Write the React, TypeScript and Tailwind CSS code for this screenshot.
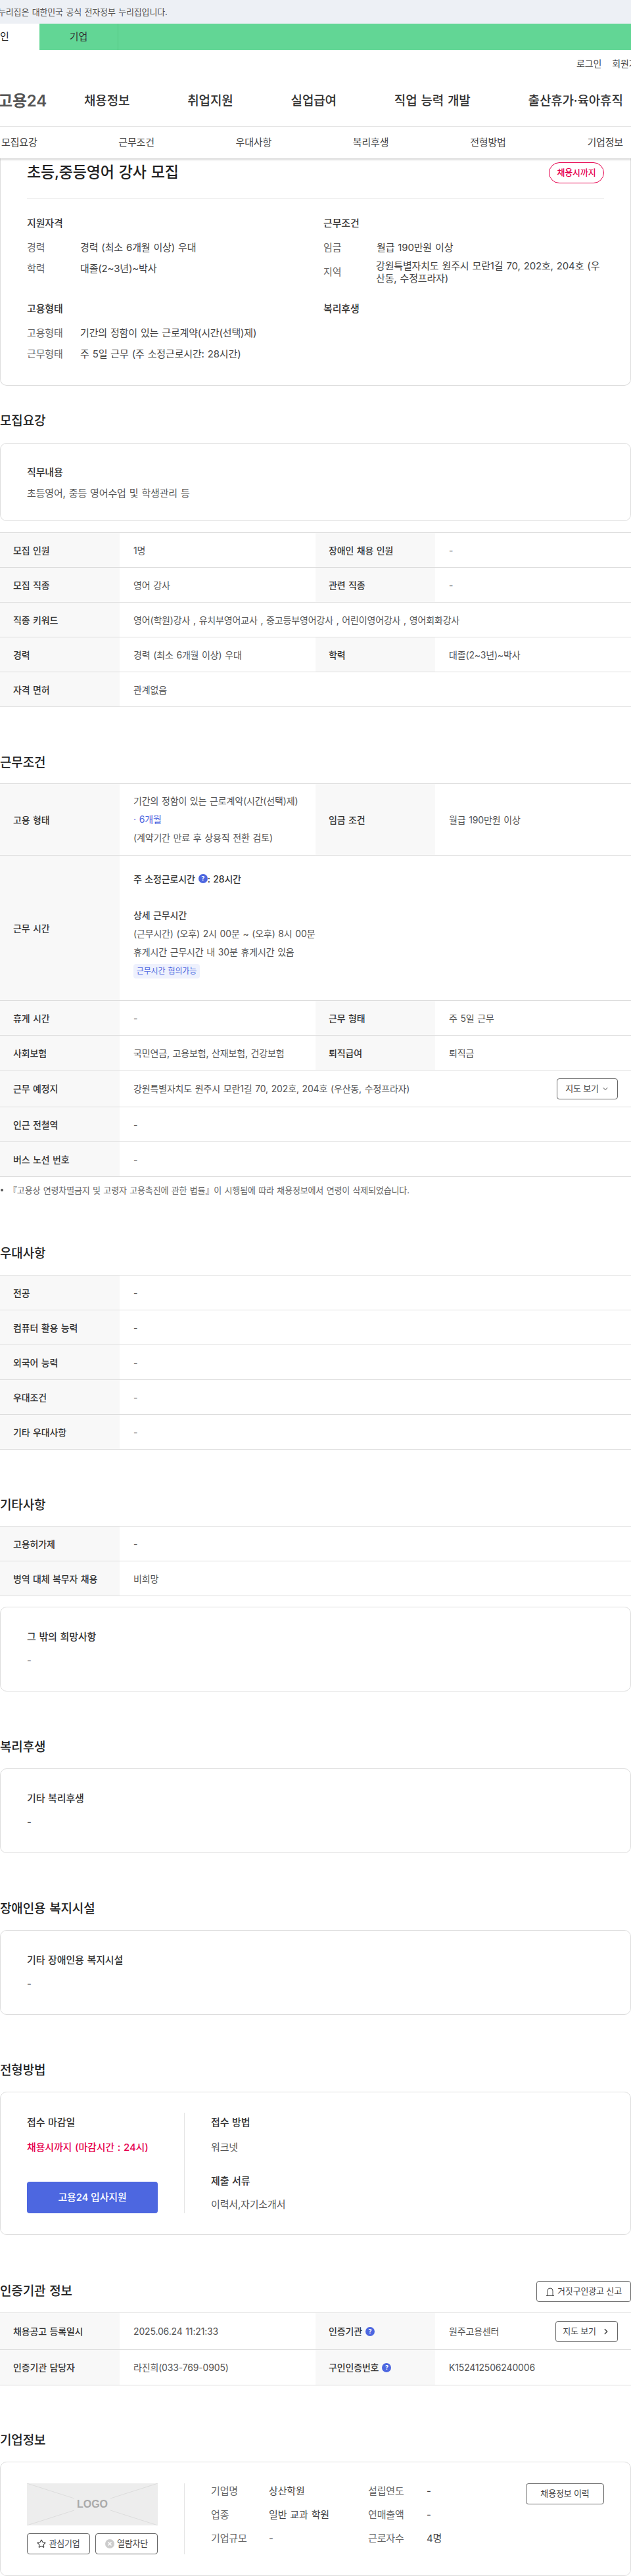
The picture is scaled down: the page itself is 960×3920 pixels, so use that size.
import type { ReactNode } from 'react'
import { ChevronDown, ChevronRight, Star } from 'lucide-react'

const NAV = ['채용정보', '취업지원', '실업급여', '직업 능력 개발', '출산휴가·육아휴직']
const TABS = ['모집요강', '근무조건', '우대사항', '복리후생', '전형방법', '기업정보']

function Heading({ children, className }: { children: ReactNode; className: string }) {
  return <h2 className={`h-[30px] text-[19px] leading-[30px] font-medium text-[#222] ${className}`}>{children}</h2>
}

function Th({ children }: { children: ReactNode }) {
  return <div className="flex items-center bg-[#f8f8f8] pl-5 text-[#333] font-medium">{children}</div>
}

function Td({ children, span }: { children: ReactNode; span?: boolean }) {
  return <div className={`flex items-center pl-[21px] text-[#555] ${span ? 'col-span-3' : ''}`}>{children}</div>
}

// h is the full row height, bottom border included
function Row({ h = 'h-[53px]', children }: { h?: string; children: ReactNode }) {
  return <div className={`grid grid-cols-[182px_298px_182px_1fr] border-b border-[#ddd] ${h}`}>{children}</div>
}

function Row1({ label, value }: { label: string; value: string }) {
  return (
    <Row>
      <Th>{label}</Th>
      <Td span>{value}</Td>
    </Row>
  )
}

function Row2({ a, b, c, d }: { a: string; b: string; c: string; d: string }) {
  return (
    <Row>
      <Th>{a}</Th>
      <Td>{b}</Td>
      <Th>{c}</Th>
      <Td>{d}</Td>
    </Row>
  )
}

function Table({ className, children }: { className: string; children: ReactNode }) {
  return <div className={`border-t border-[#ddd] text-[14px] ${className}`}>{children}</div>
}

function TextCard({ title, value, className }: { title: string; value: string; className: string }) {
  return (
    <div className={`h-[129px] rounded-[10px] border border-[#ddd] px-10 pt-[33px] text-[15px] ${className}`}>
      <div className="leading-6 text-[#333] font-medium">{title}</div>
      <div className="mt-3 leading-6 text-[#555]">{value}</div>
    </div>
  )
}

function Help() {
  return (
    <span className="mx-[5px] inline-flex h-[14px] w-[14px] items-center justify-center rounded-full bg-[#4d67e0] text-[9px] font-bold text-white">?</span>
  )
}

function OutlineBtn({ className, children }: { className: string; children: ReactNode }) {
  return (
    <button className={`flex h-8 items-center justify-center rounded-[4px] border border-[#666] text-[13px] text-[#444] ${className}`}>{children}</button>
  )
}

function Info({ label, value, w }: { label: string; value: string; w: string }) {
  return (
    <div className="flex h-[24px] items-center">
      <span className={`text-[#666] ${w}`}>{label}</span>
      <span className="text-[#444]">{value}</span>
    </div>
  )
}

function SummaryRow({ label, children }: { label: string; children: ReactNode }) {
  return (
    <div className="flex text-[15px] leading-6">
      <span className="w-[81px] shrink-0 text-[#666]">{label}</span>
      <span className="text-[#444]">{children}</span>
    </div>
  )
}

export default function App() {
  return (
    <div className="h-[3920px] w-[960px] overflow-hidden bg-white font-['Inter','Noto_Sans_CJK_KR',sans-serif] tracking-[-0.01em] whitespace-nowrap text-[#333] [word-spacing:1px]">
      {/* gov banner */}
      <div className="h-9 bg-[#edf0f5] text-[13px] leading-9 text-[#555]">
        <span className="-ml-[3px]">누리집은 대한민국 공식 전자정부 누리집입니다.</span>
      </div>
      <div className="flex h-10 bg-[#62d695] text-[15px] leading-10">
        <div className="-ml-[60px] w-[120px] bg-white text-center text-[#222]">개인</div>
        <div className="w-[120px] border-r border-[#56c886] text-center text-[#333]">기업</div>
      </div>

      {/* header */}
      <div className="flex h-10 items-center gap-4 pl-[877px] text-[14px] text-[#444]">
        <span>로그인</span>
        <span>회원가입</span>
      </div>
      <div className="flex h-[76px] items-center text-[19px] font-medium text-[#333]">
        <span className="-ml-[3px] w-[131px] text-[24px] font-semibold text-[#555]">고용24</span>
        <div className="flex gap-[88px]">
          {NAV.map(n => <span key={n}>{n}</span>)}
        </div>
      </div>
      <div className="relative z-10 flex h-[49px] items-center justify-between border-t border-[#e5e5e5] bg-white pr-3 pl-[2px] text-[15px] text-[#444] shadow-[0_2px_3px_rgba(0,0,0,0.18)]">
        {TABS.map(t => <span key={t}>{t}</span>)}
      </div>

      {/* summary card */}
      <div className="h-[346px] rounded-b-[10px] border border-t-0 border-[#ddd] px-10 pt-[6px]">
        <div className="flex h-[56px] items-start justify-between border-b border-[#e8e8e8]">
          <h1 className="text-[23px] leading-[30px] font-medium text-[#222]">초등,중등영어 강사 모집</h1>
          <span className="flex h-8 w-[84px] items-center justify-center rounded-full border border-[#e6004d] text-[13px] font-medium text-[#e6004d]">채용시까지</span>
        </div>
        <div className="mt-[25px] grid grid-cols-[451px_1fr]">
          <div className="h-[105px]">
            <div className="text-[15px] leading-6 font-medium text-[#333]">지원자격</div>
            <div className="mt-[13px] flex flex-col gap-2">
              <SummaryRow label="경력">경력 (최소 6개월 이상) 우대</SummaryRow>
              <SummaryRow label="학력">대졸(2~3년)~박사</SummaryRow>
            </div>
          </div>
          <div>
            <div className="text-[15px] leading-6 font-medium text-[#333]">근무조건</div>
            <div className="mt-[13px]">
              <SummaryRow label="임금">월급 190만원 이상</SummaryRow>
              <div className="mt-[7px] flex items-center text-[15px] leading-[18.5px]">
                <span className="w-[80px] shrink-0 text-[#666]">지역</span>
                <span className="text-[#444]">강원특별자치도 원주시 모란1길 70, 202호, 204호 (우<br />산동, 수정프라자)</span>
              </div>
            </div>
          </div>
          <div className="mt-[25px]">
            <div className="text-[15px] leading-6 font-medium text-[#333]">고용형태</div>
            <div className="mt-[13px] flex flex-col gap-2">
              <SummaryRow label="고용형태">기간의 정함이 있는 근로계약(시간(선택)제)</SummaryRow>
              <SummaryRow label="근무형태">주 5일 근무 (주 소정근로시간: 28시간)</SummaryRow>
            </div>
          </div>
          <div className="mt-[25px] text-[15px] leading-6 font-medium text-[#333]">복리후생</div>
        </div>
      </div>

      {/* 모집요강 */}
      <Heading className="mt-[39px]">모집요강</Heading>
      <div className="mt-[18px] h-[119px] rounded-[10px] border border-[#ddd] px-10 pt-8 text-[15px]">
        <div className="leading-6 font-medium text-[#333]">직무내용</div>
        <div className="mt-2 leading-6 text-[#555]">초등영어, 중등 영어수업 및 학생관리 등</div>
      </div>
      <Table className="mt-[17px]">
        <Row2 a="모집 인원" b="1명" c="장애인 채용 인원" d="-" />
        <Row2 a="모집 직종" b="영어 강사" c="관련 직종" d="-" />
        <Row1 label="직종 키워드" value="영어(학원)강사 , 유치부영어교사 , 중고등부영어강사 , 어린이영어강사 , 영어회화강사" />
        <Row2 a="경력" b="경력 (최소 6개월 이상) 우대" c="학력" d="대졸(2~3년)~박사" />
        <Row1 label="자격 면허" value="관계없음" />
      </Table>

      {/* 근무조건 */}
      <Heading className="mt-[70px]">근무조건</Heading>
      <Table className="mt-4">
        <Row h="h-[109px]">
          <Th>고용 형태</Th>
          <Td>
            <div className="leading-7">
              <div>기간의 정함이 있는 근로계약(시간(선택)제)</div>
              <div className="text-[#4d67e0]">· 6개월</div>
              <div>(계약기간 만료 후 상용직 전환 검토)</div>
            </div>
          </Td>
          <Th>임금 조건</Th>
          <Td>월급 190만원 이상</Td>
        </Row>
        <Row h="h-[221px]">
          <Th>근무 시간</Th>
          <div className="col-span-3 pt-[21px] pl-[21px] text-[#555]">
            <div className="flex h-7 items-center font-medium text-[#333]">주 소정근로시간<Help /><span className="-ml-[5px]">: 28시간</span></div>
            <div className="mt-7 h-7 leading-7 font-medium text-[#444]">상세 근무시간</div>
            <div className="h-7 leading-7">(근무시간) (오후) 2시 00분 ~ (오후) 8시 00분</div>
            <div className="h-7 leading-7">휴게시간 근무시간 내 30분 휴게시간 있음</div>
            <span className="mt-1 inline-block h-[22px] w-[101px] rounded-[4px] bg-[#eef1fd] text-center text-[12px] leading-[22px] text-[#4d67e0]">근무시간 협의가능</span>
          </div>
        </Row>
        <Row2 a="휴게 시간" b="-" c="근무 형태" d="주 5일 근무" />
        <Row2 a="사회보험" b="국민연금, 고용보험, 산재보험, 건강보험" c="퇴직급여" d="퇴직금" />
        <Row h="h-[56px]">
          <Th>근무 예정지</Th>
          <div className="col-span-3 flex items-center justify-between pr-5 pl-[21px] text-[#555]">
            <span>강원특별자치도 원주시 모란1길 70, 202호, 204호 (우산동, 수정프라자)</span>
            <OutlineBtn className="w-[93px] gap-1">지도 보기 <ChevronDown size={12} /></OutlineBtn>
          </div>
        </Row>
        <Row1 label="인근 전철역" value="-" />
        <Row1 label="버스 노선 번호" value="-" />
      </Table>
      <p className="mt-[10px] flex h-5 items-center text-[13px] leading-5 text-[#666]">
        <span className="mr-[8px] ml-[1px] h-[4px] w-[4px] rounded-full bg-[#555]" />
        『고용상 연령차별금지 및 고령자 고용촉진에 관한 법률』이 시행됨에 따라 채용정보에서 연령이 삭제되었습니다.
      </p>

      {/* 우대사항 */}
      <Heading className="mt-[72px]">우대사항</Heading>
      <Table className="mt-[17px]">
        <Row1 label="전공" value="-" />
        <Row1 label="컴퓨터 활용 능력" value="-" />
        <Row1 label="외국어 능력" value="-" />
        <Row1 label="우대조건" value="-" />
        <Row1 label="기타 우대사항" value="-" />
      </Table>

      {/* 기타사항 */}
      <Heading className="mt-[70px]">기타사항</Heading>
      <Table className="mt-4">
        <Row1 label="고용허가제" value="-" />
        <Row1 label="병역 대체 복무자 채용" value="비희망" />
      </Table>
      <TextCard className="mt-4" title="그 밖의 희망사항" value="-" />

      <Heading className="mt-[70px]">복리후생</Heading>
      <TextCard className="mt-[17px]" title="기타 복리후생" value="-" />

      <Heading className="mt-[70px]">장애인용 복지시설</Heading>
      <TextCard className="mt-[17px]" title="기타 장애인용 복지시설" value="-" />

      {/* 전형방법 */}
      <Heading className="mt-[70px]">전형방법</Heading>
      <div className="mt-[17px] flex h-[218px] rounded-[10px] border border-[#ddd] px-10 py-[31px] text-[15px]">
        <div className="flex h-[153px] w-[240px] flex-col border-r border-[#e5e5e5] pr-10">
          <div className="mt-[3px] leading-6 font-medium text-[#333]">접수 마감일</div>
          <div className="mt-[14px] leading-6 font-medium text-[#e6004d]">채용시까지 (마감시간 : 24시)</div>
          <button className="mt-auto h-12 rounded-[4px] bg-[#4d67e0] text-[15px] font-medium text-white">고용24 입사지원</button>
        </div>
        <div className="pl-10">
          <div className="mt-[3px] leading-6 font-medium text-[#333]">접수 방법</div>
          <div className="mt-[14px] leading-6 text-[#555]">워크넷</div>
          <div className="mt-[27px] leading-6 font-medium text-[#333]">제출 서류</div>
          <div className="mt-3 leading-6 text-[#555]">이력서,자기소개서</div>
        </div>
      </div>

      {/* 인증기관 정보 */}
      <div className="mt-[70px] flex h-8 items-center justify-between">
        <h2 className="text-[19px] font-medium text-[#222]">인증기관 정보</h2>
        <OutlineBtn className="w-[144px] gap-1">
          <svg width="14" height="15" viewBox="0 0 14 15" fill="none" stroke="#444" strokeWidth="1">
            <path d="M3 13V6a4 4 0 0 1 8 0v7M1 13.5h12" />
          </svg>
          거짓구인광고 신고
        </OutlineBtn>
      </div>
      <Table className="mt-4">
        <Row h="h-[56px]">
          <Th>채용공고 등록일시</Th>
          <Td>2025.06.24 11:21:33</Td>
          <Th>인증기관<Help /></Th>
          <div className="flex items-center justify-between pr-5 pl-[21px] text-[#555]">
            <span>원주고용센터</span>
            <OutlineBtn className="w-[95px] gap-2">지도 보기 <ChevronRight size={14} strokeWidth={2.5} /></OutlineBtn>
          </div>
        </Row>
        <Row h="h-[54px]">
          <Th>인증기관 담당자</Th>
          <Td>라진희(033-769-0905)</Td>
          <Th>구인인증번호<Help /></Th>
          <Td>K152412506240006</Td>
        </Row>
      </Table>

      {/* 기업정보 */}
      <Heading className="mt-[69px]">기업정보</Heading>
      <div className="mt-[17px] flex h-[174px] rounded-[10px] border border-[#ddd] px-10 pt-8 text-[15px]">
        <div className="h-[108px] w-[240px] border-r border-[#e5e5e5] pr-10">
          <div className="relative flex h-16 items-center justify-center bg-[#ededed] font-['Liberation_Sans',sans-serif] text-[16px] font-bold tracking-normal text-[#aaa]">
            <svg className="absolute inset-0" width="199" height="64" viewBox="0 0 199 64" stroke="#dcdcdc" strokeWidth="1">
              <path d="M0 0L72 23M199 0L127 23M0 64L72 41M199 64L127 41" />
            </svg>
            LOGO
          </div>
          <div className="mt-3 flex justify-between">
            <OutlineBtn className="w-[96px] gap-1"><Star size={14} />관심기업</OutlineBtn>
            <OutlineBtn className="w-[95px] gap-1">
              <svg width="14" height="14" viewBox="0 0 14 14">
                <circle cx="7" cy="7" r="7" fill="#ccc" />
                <path d="M4.5 4.5l5 5M9.5 4.5l-5 5" stroke="#fff" strokeWidth="1.5" />
              </svg>
              열람차단
            </OutlineBtn>
          </div>
        </div>
        <div className="flex pl-10">
          <div className="flex w-[239px] flex-col gap-3">
            <Info label="기업명" value="상산학원" w="w-[88px]" />
            <Info label="업종" value="일반 교과 학원" w="w-[88px]" />
            <Info label="기업규모" value="-" w="w-[88px]" />
          </div>
          <div className="flex w-[240px] flex-col gap-3">
            <Info label="설립연도" value="-" w="w-[89px]" />
            <Info label="연매출액" value="-" w="w-[89px]" />
            <Info label="근로자수" value="4명" w="w-[89px]" />
          </div>
        </div>
        <OutlineBtn className="ml-auto w-[119px]">채용정보 이력</OutlineBtn>
      </div>
    </div>
  )
}
